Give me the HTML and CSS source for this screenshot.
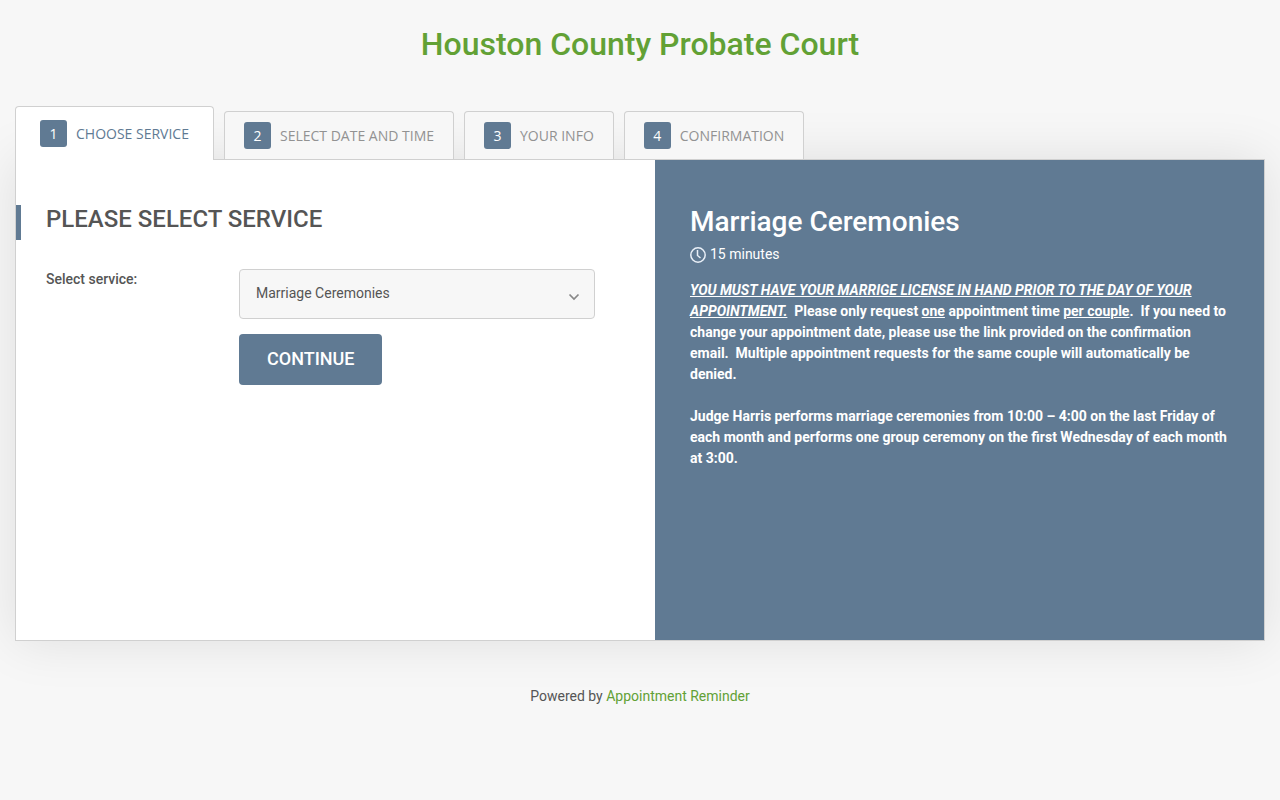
FILE: index.html
```html
<!DOCTYPE html>
<html lang="en">
  <head>
    <meta charset="UTF-8">
    <meta name="viewport" content="width=device-width, initial-scale=1.0">
    <title>Houston County Probate Court</title>
    <link rel="stylesheet" href="styles.css">
  </head>
  <body>
    <h1 class="page-title">Houston County Probate Court</h1>
    <div class="container">
      <nav>
        <ol class="tabs">
          <li><a class="tab active" href="#service" aria-current="step"><span class="num">1</span>Choose service</a></li>
          <li><a class="tab" href="#date"><span class="num">2</span>Select date and time</a></li>
          <li><a class="tab" href="#info"><span class="num">3</span>Your info</a></li>
          <li><a class="tab" href="#confirmation"><span class="num">4</span>Confirmation</a></li>
        </ol>
      </nav>
      <main class="panel" id="service">
        <form class="panel-form" action="#date" method="get">
          <h2 class="form-title">Please select service</h2>
          <div class="form-row">
            <label for="serviceSelect">Select service:</label>
            <div class="form-field">
              <div class="select-wrap">
                <select id="serviceSelect" name="service">
                  <option selected>Marriage Ceremonies</option>
                </select>
                <svg class="arrow" width="12" height="8" viewBox="0 0 12 8" aria-hidden="true"><path d="M1.5 1.5 6 6 10.5 1.5" fill="none" stroke="#888" stroke-width="1.7"/></svg>
              </div>
              <button type="submit" class="btn">Continue</button>
            </div>
          </div>
        </form>
        <aside class="panel-info">
          <h2 class="info-title">Marriage Ceremonies</h2>
          <p class="duration">
            <svg width="16" height="16" viewBox="0 0 16 16" aria-hidden="true"><circle cx="8" cy="8" r="7.2"/><path d="M7.5 3v5.5l3 2.5"/></svg>
            15 minutes
          </p>
          <p class="desc"><em><u>YOU MUST HAVE YOUR MARRIGE LICENSE IN HAND PRIOR TO THE DAY OF YOUR APPOINTMENT.</u></em>&nbsp; Please only request <u>one</u> appointment time <u>per couple</u>.&nbsp; If you need to change your appointment date, please use the link provided on the confirmation email.&nbsp; Multiple appointment requests for the same couple will automatically be denied.</p>
          <p class="desc">Judge Harris performs marriage ceremonies from 10:00 – 4:00 on the last Friday of each month and performs one group ceremony on the first Wednesday of each month at 3:00.</p>
        </aside>
      </main>
    </div>
    <footer class="footer">Powered by <a href="#">Appointment Reminder</a></footer>
  </body>
</html>
```
FILE: styles.css
```css
* { box-sizing: border-box; }
body { margin: 0; background-color: #f7f7f7; color: #555; font: 14px/21px Roboto, "Liberation Sans", sans-serif; }
h1, h2, p { margin: 0; }
a { text-decoration: none; }
.page-title { padding: 24px 15px 0; color: #62a135; font-size: 32px; line-height: 40px; font-weight: 500; text-align: center; }
.container { padding: 42px 15px 0; }

/* steps */
.tabs { display: flex; align-items: flex-end; gap: 10px; margin: 0; padding: 0; list-style: none; }
.tab { position: relative; z-index: 1; display: flex; align-items: center; height: 48px; padding: 0 19px; border: 1px solid #d0d0d0; border-bottom: 0; border-radius: 4px 4px 0 0; background-color: #f7f7f7; color: #929292; font-family: "Open Sans", sans-serif; text-transform: uppercase; }
.tab.active { height: 54px; margin-bottom: -1px; padding: 0 24px; background-color: white; color: #607a93; }
.num { width: 27px; margin-right: 9px; border-radius: 3px; background-color: #607a93; color: white; font-weight: 500; line-height: 27px; text-align: center; }

.panel { display: grid; grid-template-columns: minmax(0, 639fr) minmax(0, 609fr); min-height: 482px; border: 1px solid #d0d0d0; background-color: white; box-shadow: 0 0 50px rgba(0, 0, 0, 0.1); }
.panel-form { padding: 45px 60px 45px 0; }
.form-title { margin-bottom: 29px; padding: 0 0 7px 25px; border-left: 5px solid #607a93; font-size: 24px; line-height: 28px; font-weight: 500; text-transform: uppercase; }
.form-row { display: flex; padding-left: 30px; }
.form-row label { width: 193px; font-weight: 500; }
.form-field { flex: 1; }
.select-wrap { position: relative; margin-bottom: 15px; }
.select-wrap select { appearance: none; display: block; width: 100%; height: 50px; padding: 0 40px 2px 16px; border: 1px solid #d0d0d0; border-radius: 4px; background-color: #f7f7f7; color: #555; font: inherit; }
.arrow { position: absolute; right: 15px; top: 24px; pointer-events: none; }
.btn { height: 51px; padding: 0 28px 2px; border: 0; border-radius: 4px; background-color: #607a93; color: white; font: 500 18px/21px Roboto, sans-serif; text-transform: uppercase; cursor: pointer; }

.panel-info { padding: 45px 35px; background-color: #607a93; color: white; }
.info-title { font-size: 28px; line-height: 34px; font-weight: 500; }
.duration { display: flex; align-items: center; gap: 4px; margin: 5px 0 15px; }
.duration svg { fill: none; stroke: #eaf0f8; stroke-width: 1.5; }
.desc { margin-bottom: 21px; font-weight: 700; }

.footer { padding: 45px 15px; text-align: center; }
.footer a { color: #62a135; }
```
